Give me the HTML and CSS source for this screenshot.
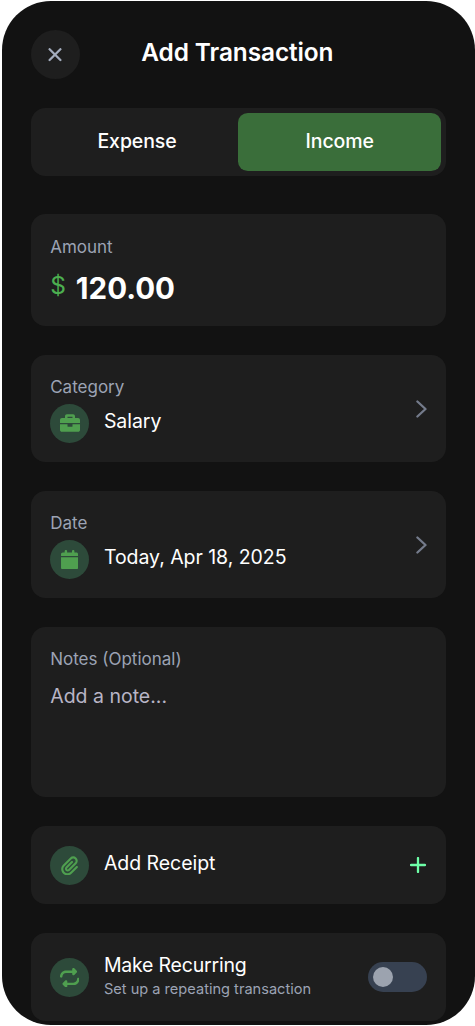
FILE: index.html
```html
<!DOCTYPE html>
<html lang="en">
<head>
<meta charset="utf-8">
<title>Add Transaction</title>
<link rel="stylesheet" href="styles.css">
</head>
<body>
<main class="phone">
  <header class="header">
    <button class="close" aria-label="Close">
      <svg width="14" height="14" viewBox="0 0 14 14"><path class="stroke" d="M1.6 1.2 12.4 12M12.4 1.2 1.6 12"/></svg>
    </button>
    <h1 class="title">Add Transaction</h1>
  </header>

  <div class="tabs">
    <button class="tab">Expense</button>
    <button class="tab tab-active">Income</button>
  </div>

  <section class="card amount">
    <div class="label">Amount</div>
    <div class="amount-row"><span class="currency">$</span><span class="value">120.00</span></div>
  </section>

  <section class="card picker">
    <div>
      <div class="label">Category</div>
      <div class="item">
        <span class="badge"><svg width="20" height="20" viewBox="0 0 512 512"><path d="M320 336c0 8.840-7.160 16-16 16h-96c-8.840 0-16-7.160-16-16v-48H0v144c0 25.600 22.400 48 48 48h416c25.600 0 48-22.400 48-48V288H320v48zm144-208h-80V80c0-25.600-22.400-48-48-48H176c-25.600 0-48 22.400-48 48v48H48c-25.600 0-48 22.400-48 48v80h512v-80c0-25.600-22.400-48-48-48zm-144 0H192V96h128v32z"/></svg></span>
        <span class="text">Salary</span>
      </div>
    </div>
    <svg class="chevron" width="12" height="18" viewBox="0 0 12 18"><path class="stroke" d="M2.400 1.500 10.500 9 2.400 16.500"/></svg>
  </section>

  <section class="card picker">
    <div>
      <div class="label">Date</div>
      <div class="item">
        <span class="badge"><svg width="17.100" height="19.500" viewBox="0 0 448 512"><path d="M96 32V64H48C21.500 64 0 85.500 0 112v48H448V112c0-26.500-21.500-48-48-48H352V32c0-17.700-14.300-32-32-32s-32 14.300-32 32V64H160V32c0-17.700-14.300-32-32-32S96 14.300 96 32zM448 192H0V464c0 26.500 21.500 48 48 48H400c26.500 0 48-21.500 48-48V192z"/></svg></span>
        <span class="text">Today, Apr 18, 2025</span>
      </div>
    </div>
    <svg class="chevron" width="12" height="18" viewBox="0 0 12 18"><path class="stroke" d="M2.400 1.500 10.500 9 2.400 16.500"/></svg>
  </section>

  <section class="card notes">
    <div class="label">Notes (Optional)</div>
    <div class="placeholder">Add a note...</div>
  </section>

  <section class="card action receipt">
    <span class="badge"><svg width="17.100" height="19.500" viewBox="0 0 448 512"><path d="M364.200 83.800c-24.400-24.400-64-24.400-88.400 0l-184 184c-42.100 42.100-42.100 110.300 0 152.400s110.300 42.100 152.400 0l152-152c10.900-10.900 28.700-10.900 39.600 0s10.900 28.700 0 39.600l-152 152c-64 64-167.600 64-231.600 0s-64-167.600 0-231.600l184-184c46.300-46.300 121.300-46.300 167.600 0s46.300 121.300 0 167.600l-176 176c-28.600 28.600-75 28.600-103.600 0s-28.600-75 0-103.600l144-144c10.900-10.900 28.700-10.900 39.600 0s10.900 28.700 0 39.600l-144 144c-6.700 6.700-6.700 17.700 0 24.400s17.700 6.700 24.400 0l176-176c24.400-24.400 24.400-64 0-88.400z"/></svg></span>
    <span class="text">Add Receipt</span>
    <svg class="plus" width="16" height="16" viewBox="0 0 16 16"><path class="stroke" d="M8 1V15M1 8H15"/></svg>
  </section>

  <section class="card action recurring">
    <span class="badge"><svg width="19.500" height="19.500" viewBox="0 0 512 512"><path d="M0 224c0 17.700 14.300 32 32 32s32-14.300 32-32c0-53 43-96 96-96H320v32c0 12.900 7.800 24.600 19.800 29.600s25.700 2.200 34.900-6.900l64-64c12.500-12.500 12.500-32.800 0-45.300l-64-64c-9.200-9.200-22.900-11.900-34.900-6.900S320 19.100 320 32V64H160C71.600 64 0 135.600 0 224zm512 64c0-17.700-14.300-32-32-32s-32 14.300-32 32c0 53-43 96-96 96H192V352c0-12.900-7.800-24.600-19.800-29.600s-25.700-2.200-34.900 6.900l-64 64c-12.500 12.500-12.500 32.800 0 45.300l64 64c9.200 9.200 22.900 11.900 34.900 6.900s19.800-16.600 19.800-29.600V448H352c88.400 0 160-71.600 160-160z"/></svg></span>
    <div class="stack">
      <div class="text">Make Recurring</div>
      <div class="sub">Set up a repeating transaction</div>
    </div>
    <span class="switch"><span class="knob"></span></span>
  </section>
</main>
</body>
</html>
```
FILE: styles.css
```css
* { box-sizing: border-box; }
body {
  margin: 0;
  padding: 1px 0 0 2px;
  height: 1026px;
  overflow: hidden;
  background: #fff;
  font-family: Inter, "Liberation Sans", sans-serif;
  color: #fff;
}
button { border: 0; padding: 0; font: inherit; color: inherit; }
svg { display: block; flex: none; fill: currentColor; }
.stroke { fill: none; stroke: currentColor; stroke-linecap: round; stroke-linejoin: round; stroke-width: 2.3; }

.phone {
  width: 473px;
  height: 1024px;
  padding: 29px 29px 0 28.700px;
  border-radius: 49px;
  background: #121212;
  overflow: hidden;
}
.header {
  display: grid;
  grid-template-columns: 49px 1fr 49px;
  height: 49px;
  margin-bottom: 28.700px;
}
.close {
  display: grid;
  place-items: center;
  width: 49px;
  height: 49px;
  border-radius: 50%;
  background: #1e1e1e;
  color: #a3acbd;
}
.title {
  margin: 0;
  padding-right: 2px;
  text-align: center;
  font-size: 24.400px;
  font-weight: 600;
  letter-spacing: -.08px;
  line-height: 44px;
  white-space: nowrap;
}
.tabs {
  display: flex;
  height: 68px;
  margin-bottom: 38.700px;
  padding: 5px;
  border-radius: 14.600px;
  background: #1e1e1e;
}
.tab {
  flex: 1;
  padding: 0 0 2px;
  border-radius: 9.800px;
  background: none;
  font-size: 19.500px;
  font-weight: 450;
  letter-spacing: -.1px;
}
.tab-active { background: #3a6e3a; }

.card {
  border-radius: 14.600px;
  background: #1e1e1e;
  margin-bottom: 29px;
  padding: 19.500px;
}
.label { font-size: 17px; line-height: 24px; color: #9ca3b4; }
.text { font-size: 19.500px; letter-spacing: -.04px; line-height: 29px; white-space: nowrap; }
.amount { height: 112px; }
.amount .label { padding-top: 1px; }
.amount-row { display: flex; gap: 10px; margin-top: 7px; line-height: 44px; }
.currency { font-size: 24.400px; line-height: 38px; color: #4caf50; }
.value { font-size: 29.500px; font-weight: 700; }

.picker { display: flex; justify-content: space-between; align-items: center; height: 107px; }
.item { display: flex; align-items: center; gap: 14.700px; margin-top: 5px; }
.item .text { padding-bottom: 4px; }
.badge {
  display: grid;
  place-items: center;
  flex: none;
  width: 39px;
  height: 39px;
  border-radius: 50%;
  background: #2d4a3a;
  color: #4f9f4f;
}
.chevron { color: #747b8b; }

.notes { height: 170px; }
.placeholder { margin-top: 11px; font-size: 19.500px; line-height: 29px; color: #b8b5c6; }
.action { display: flex; align-items: center; gap: 14.700px; }
.receipt { height: 78px; }
.receipt .text { padding-bottom: 3px; }
.plus { margin: 0 1px 0 auto; color: #6effa8; }
.recurring { height: 88px; margin-bottom: 0; }
.stack { padding-bottom: 4px; }
.stack .text { line-height: 28px; letter-spacing: -.2px; }
.sub { font-size: 14.600px; line-height: 20px; color: #9ca3b4; white-space: nowrap; }
.switch {
  display: flex;
  align-items: center;
  width: 59px;
  height: 30px;
  margin-left: auto;
  padding: 5px;
  border-radius: 15px;
  background: #374151;
}
.knob { width: 20px; height: 20px; border-radius: 50%; background: #9ca3af; }
```
